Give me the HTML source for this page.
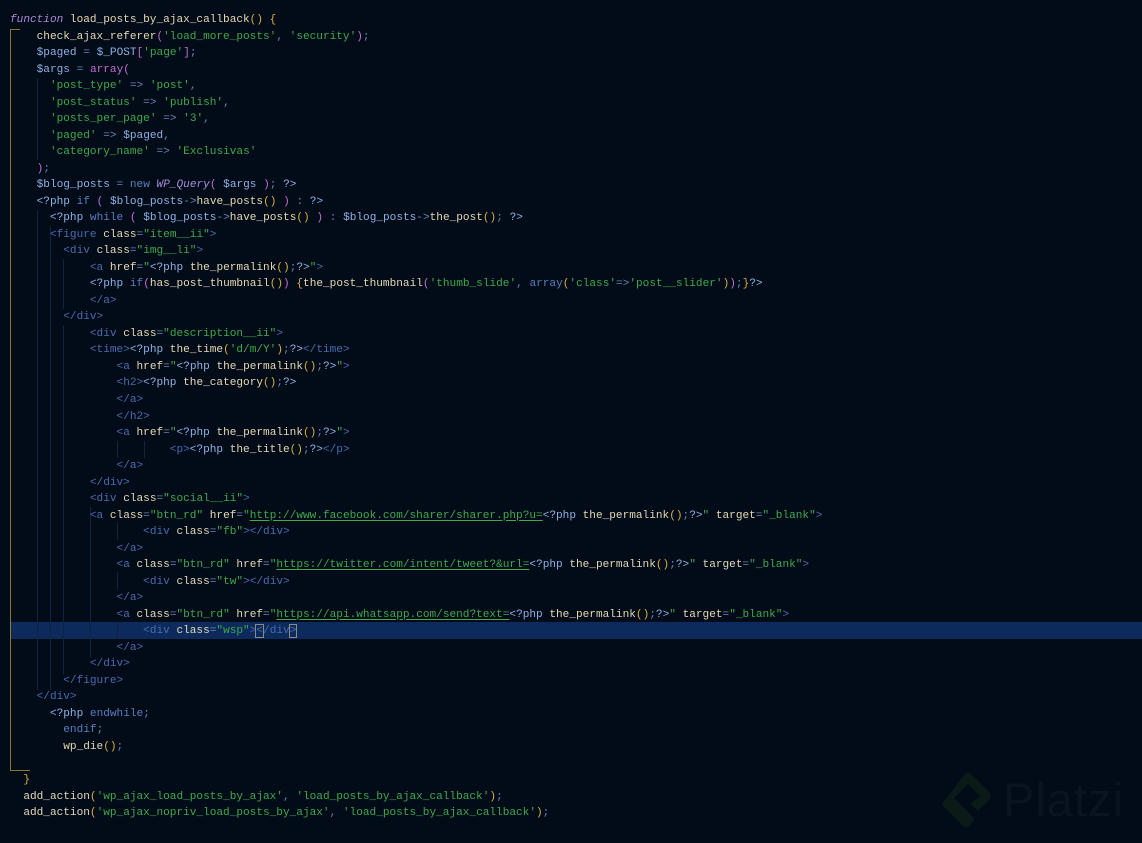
<!DOCTYPE html>
<html><head><meta charset="utf-8"><style>
html,body{margin:0;padding:0;background:#020b18;width:1142px;height:843px;overflow:hidden}
body{position:relative;font-family:"Liberation Mono",monospace;font-size:11.1px;color:#e6dab4}
.l{position:absolute;left:10px;height:16.52px;line-height:16.52px;white-space:pre}
.k{color:#a98ad8;font-style:italic}.s{color:#3eaa4c}.p{color:#6a85b5}.v{color:#8fb1e4}.t{color:#4a6cb0}.y{color:#d8b23c}.m{color:#c26fd0}.n{color:#5a7ec2}.u{color:#3eaa4c;text-decoration:underline;text-underline-offset:2px}
.hl{position:absolute;left:10px;right:0;top:622px;height:17px;background:#0c2a5c}
.g{position:absolute;width:1px;background:#0f2440}
</style></head><body>
<div class="hl"></div>
<div style="position:absolute;left:10px;top:29px;width:1px;height:741px;background:#8a7a2a"></div>
<div style="position:absolute;left:10px;top:770px;width:20px;height:1px;background:#8a7a2a"></div>
<div style="position:absolute;left:10px;top:29px;width:10px;height:1px;background:#8a7a2a"></div>
<div class="g" style="left:37px;top:78px;height:82px"></div>
<div class="g" style="left:37px;top:210px;height:480px"></div>
<div class="g" style="left:50px;top:226px;height:464px"></div>
<div class="g" style="left:63px;top:259px;height:50px"></div>
<div class="g" style="left:63px;top:325px;height:350px"></div>
<div class="g" style="left:90px;top:507px;height:150px"></div>
<div class="g" style="left:117px;top:523px;height:17px"></div>
<div class="g" style="left:117px;top:572px;height:17px"></div>
<div class="g" style="left:117px;top:622px;height:17px"></div>
<div class="g" style="left:117px;top:441px;height:17px"></div>
<div class="g" style="left:144px;top:441px;height:17px"></div>
<div class="l" style="top:12px"><span class="k">function</span> load_posts_by_ajax_callback<span class="y">()</span> <span class="y">{</span></div>
<div class="l" style="top:28.5px">    check_ajax_referer<span class="m">(</span><span class="s">'load_more_posts'</span><span class="p">,</span> <span class="s">'security'</span><span class="m">)</span><span class="p">;</span></div>
<div class="l" style="top:45px">    <span class="v">$paged</span> <span class="p">=</span> <span class="v">$_POST</span><span class="m">[</span><span class="s">'page'</span><span class="m">]</span><span class="p">;</span></div>
<div class="l" style="top:61.6px">    <span class="v">$args</span> <span class="p">=</span> <span class="m">array(</span></div>
<div class="l" style="top:78.1px">      <span class="s">'post_type'</span> <span class="p">=&gt;</span> <span class="s">'post'</span><span class="p">,</span></div>
<div class="l" style="top:94.6px">      <span class="s">'post_status'</span> <span class="p">=&gt;</span> <span class="s">'publish'</span><span class="p">,</span></div>
<div class="l" style="top:111.1px">      <span class="s">'posts_per_page'</span> <span class="p">=&gt;</span> <span class="s">'3'</span><span class="p">,</span></div>
<div class="l" style="top:127.6px">      <span class="s">'paged'</span> <span class="p">=&gt;</span> <span class="v">$paged</span><span class="p">,</span></div>
<div class="l" style="top:144.2px">      <span class="s">'category_name'</span> <span class="p">=&gt;</span> <span class="s">'Exclusivas'</span></div>
<div class="l" style="top:160.7px">    <span class="m">)</span><span class="p">;</span></div>
<div class="l" style="top:177.2px">    <span class="v">$blog_posts</span> <span class="p">=</span> <span class="n">new</span> <span class="k">WP_Query</span><span class="m">(</span> <span class="v">$args</span> <span class="m">)</span><span class="p">;</span> <span class="v">?&gt;</span></div>
<div class="l" style="top:193.7px">    <span class="v">&lt;?php</span> <span class="n">if</span> <span class="m">(</span> <span class="v">$blog_posts</span><span class="p">-&gt;</span>have_posts<span class="y">()</span> <span class="m">)</span> <span class="p">:</span> <span class="v">?&gt;</span></div>
<div class="l" style="top:210.2px">      <span class="v">&lt;?php</span> <span class="n">while</span> <span class="m">(</span> <span class="v">$blog_posts</span><span class="p">-&gt;</span>have_posts<span class="y">()</span> <span class="m">)</span> <span class="p">:</span> <span class="v">$blog_posts</span><span class="p">-&gt;</span>the_post<span class="y">()</span><span class="p">;</span> <span class="v">?&gt;</span></div>
<div class="l" style="top:226.8px">      <span class="t">&lt;figure</span> class<span class="p">=</span><span class="s">"item__ii"</span><span class="t">&gt;</span></div>
<div class="l" style="top:243.3px">        <span class="t">&lt;div</span> class<span class="p">=</span><span class="s">"img__li"</span><span class="t">&gt;</span></div>
<div class="l" style="top:259.8px">            <span class="t">&lt;a</span> href<span class="p">=</span><span class="s">"</span><span class="v">&lt;?php</span> the_permalink<span class="y">()</span><span class="p">;</span><span class="v">?&gt;</span><span class="s">"</span><span class="t">&gt;</span></div>
<div class="l" style="top:276.3px">            <span class="v">&lt;?php</span> <span class="n">if</span><span class="m">(</span>has_post_thumbnail<span class="y">()</span><span class="m">)</span> <span class="y">{</span>the_post_thumbnail<span class="m">(</span><span class="s">'thumb_slide'</span><span class="p">,</span> <span class="n">array</span><span class="y">(</span><span class="s">'class'</span><span class="p">=&gt;</span><span class="s">'post__slider'</span><span class="y">)</span><span class="m">)</span><span class="p">;</span><span class="y">}</span><span class="v">?&gt;</span></div>
<div class="l" style="top:292.8px">            <span class="t">&lt;/a&gt;</span></div>
<div class="l" style="top:309.4px">        <span class="t">&lt;/div&gt;</span></div>
<div class="l" style="top:325.9px">            <span class="t">&lt;div</span> class<span class="p">=</span><span class="s">"description__ii"</span><span class="t">&gt;</span></div>
<div class="l" style="top:342.4px">            <span class="t">&lt;time&gt;</span><span class="v">&lt;?php</span> the_time<span class="y">(</span><span class="s">'d/m/Y'</span><span class="y">)</span><span class="p">;</span><span class="v">?&gt;</span><span class="t">&lt;/time&gt;</span></div>
<div class="l" style="top:358.9px">                <span class="t">&lt;a</span> href<span class="p">=</span><span class="s">"</span><span class="v">&lt;?php</span> the_permalink<span class="y">()</span><span class="p">;</span><span class="v">?&gt;</span><span class="s">"</span><span class="t">&gt;</span></div>
<div class="l" style="top:375.4px">                <span class="t">&lt;h2&gt;</span><span class="v">&lt;?php</span> the_category<span class="y">()</span><span class="p">;</span><span class="v">?&gt;</span></div>
<div class="l" style="top:392px">                <span class="t">&lt;/a&gt;</span></div>
<div class="l" style="top:408.5px">                <span class="t">&lt;/h2&gt;</span></div>
<div class="l" style="top:425px">                <span class="t">&lt;a</span> href<span class="p">=</span><span class="s">"</span><span class="v">&lt;?php</span> the_permalink<span class="y">()</span><span class="p">;</span><span class="v">?&gt;</span><span class="s">"</span><span class="t">&gt;</span></div>
<div class="l" style="top:441.5px">                        <span class="t">&lt;p&gt;</span><span class="v">&lt;?php</span> the_title<span class="y">()</span><span class="p">;</span><span class="v">?&gt;</span><span class="t">&lt;/p&gt;</span></div>
<div class="l" style="top:458px">                <span class="t">&lt;/a&gt;</span></div>
<div class="l" style="top:474.6px">            <span class="t">&lt;/div&gt;</span></div>
<div class="l" style="top:491.1px">            <span class="t">&lt;div</span> class<span class="p">=</span><span class="s">"social__ii"</span><span class="t">&gt;</span></div>
<div class="l" style="top:507.6px">            <span class="t">&lt;a</span> class<span class="p">=</span><span class="s">"btn_rd"</span> href<span class="p">=</span><span class="s">"</span><span class="u">http://www.facebook.com/sharer/sharer.php?u=</span><span class="v">&lt;?php</span> the_permalink<span class="y">()</span><span class="p">;</span><span class="v">?&gt;</span><span class="s">"</span> target<span class="p">=</span><span class="s">"_blank"</span><span class="t">&gt;</span></div>
<div class="l" style="top:524.1px">                    <span class="t">&lt;div</span> class<span class="p">=</span><span class="s">"fb"</span><span class="t">&gt;&lt;/div&gt;</span></div>
<div class="l" style="top:540.6px">                <span class="t">&lt;/a&gt;</span></div>
<div class="l" style="top:557.2px">                <span class="t">&lt;a</span> class<span class="p">=</span><span class="s">"btn_rd"</span> href<span class="p">=</span><span class="s">"</span><span class="u">https://twitter.com/intent/tweet?&amp;url=</span><span class="v">&lt;?php</span> the_permalink<span class="y">()</span><span class="p">;</span><span class="v">?&gt;</span><span class="s">"</span> target<span class="p">=</span><span class="s">"_blank"</span><span class="t">&gt;</span></div>
<div class="l" style="top:573.7px">                    <span class="t">&lt;div</span> class<span class="p">=</span><span class="s">"tw"</span><span class="t">&gt;&lt;/div&gt;</span></div>
<div class="l" style="top:590.2px">                <span class="t">&lt;/a&gt;</span></div>
<div class="l" style="top:606.7px">                <span class="t">&lt;a</span> class<span class="p">=</span><span class="s">"btn_rd"</span> href<span class="p">=</span><span class="s">"</span><span class="u">https://api.whatsapp.com/send?text=</span><span class="v">&lt;?php</span> the_permalink<span class="y">()</span><span class="p">;</span><span class="v">?&gt;</span><span class="s">"</span> target<span class="p">=</span><span class="s">"_blank"</span><span class="t">&gt;</span></div>
<div class="l" style="top:623.2px">                    <span class="t">&lt;div</span> class<span class="p">=</span><span class="s">"wsp"</span><span class="t">&gt;<span style="outline:1px solid #8a8a8a">&lt;</span>/div<span style="outline:1px solid #8a8a8a">&gt;</span></span></div>
<div class="l" style="top:639.8px">                <span class="t">&lt;/a&gt;</span></div>
<div class="l" style="top:656.3px">            <span class="t">&lt;/div&gt;</span></div>
<div class="l" style="top:672.8px">        <span class="t">&lt;/figure&gt;</span></div>
<div class="l" style="top:689.3px">    <span class="t">&lt;/div&gt;</span></div>
<div class="l" style="top:705.8px">      <span class="v">&lt;?php</span> <span class="n">endwhile</span><span class="p">;</span></div>
<div class="l" style="top:722.4px">        <span class="n">endif</span><span class="p">;</span></div>
<div class="l" style="top:738.9px">        wp_die<span class="y">()</span><span class="p">;</span></div>
<div class="l" style="top:771.9px">  <span class="y">}</span></div>
<div class="l" style="top:788.5px">  add_action<span class="y">(</span><span class="s">'wp_ajax_load_posts_by_ajax'</span><span class="p">,</span> <span class="s">'load_posts_by_ajax_callback'</span><span class="y">)</span><span class="p">;</span></div>
<div class="l" style="top:805px">  add_action<span class="y">(</span><span class="s">'wp_ajax_nopriv_load_posts_by_ajax'</span><span class="p">,</span> <span class="s">'load_posts_by_ajax_callback'</span><span class="y">)</span><span class="p">;</span></div>
<svg style="position:absolute;left:938px;top:770px" width="60" height="66" viewBox="0 0 60 66"><path d="M27 4 Q30 1 33 4 L51 22 Q54 26 51 30 L40 41 L32 34 L42 26 L30 14 L16 28 L30 42 L35 47 Q37 49 35 52 L31 56 Q28 59 25 56 L7 38 Q3 34 7 30 Z" fill="#0b1917"/></svg>
<div style="position:absolute;left:1003px;top:772px;font-family:'Liberation Sans',sans-serif;font-size:47px;color:#0a1421;letter-spacing:1px">Platzi</div>
</body></html>
